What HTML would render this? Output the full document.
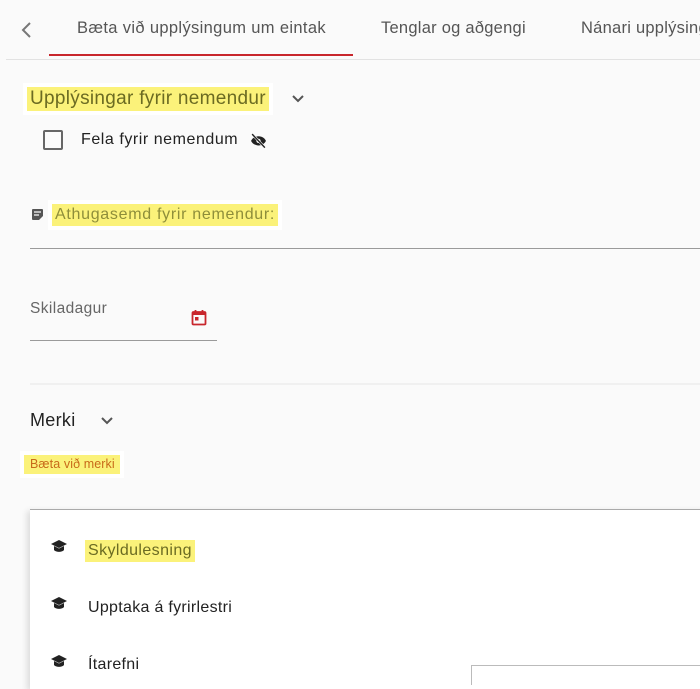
<!DOCTYPE html>
<html><head><meta charset="utf-8"><style>
*{margin:0;padding:0;box-sizing:border-box}
body{width:700px;height:675px;overflow:hidden;background:#fafafa;font-family:"Liberation Sans",sans-serif;position:relative;color:#222}
.a{position:absolute;white-space:nowrap}
.hl{background:#fbf27a;box-shadow:0 0 0 4px #fff}
</style></head><body>
<svg class="a" style="left:18px;top:20px" width="16" height="20" viewBox="0 0 16 20"><path d="M12 3 L5 10 L12 17" stroke="#777" stroke-width="2" fill="none"/></svg>
<div class="a" style="left:77px;top:19px;font-size:16.5px;letter-spacing:0.35px;color:#555">Bæta við upplýsingum um eintak</div>
<div class="a" style="left:381px;top:19px;font-size:16.5px;letter-spacing:0.25px;color:#555">Tenglar og aðgengi</div>
<div class="a" style="left:581px;top:19px;font-size:16.5px;letter-spacing:0.25px;color:#555">Nánari upplýsingar</div>
<div class="a" style="left:49px;top:54px;width:304px;height:2px;background:#c8262c"></div>
<div class="a" style="left:6px;top:59px;width:694px;height:1px;background:#e2e2e2"></div>
<div class="a hl" style="left:27px;top:87px;height:24px;padding:0 3px;font-size:19px;letter-spacing:0.3px;line-height:24px;color:#6b6b22">Upplýsingar fyrir nemendur</div>
<svg class="a" style="left:290px;top:92px" width="16" height="14" viewBox="0 0 16 14"><path d="M3 4 L8 9 L13 4" stroke="#555" stroke-width="2" fill="none"/></svg>
<div class="a" style="left:43px;top:130px;width:20px;height:20px;border:2px solid #666;border-radius:2px"></div>
<div class="a" style="left:81px;top:131px;font-size:16px;letter-spacing:0.55px;color:#222">Fela fyrir nemendum</div>
<svg class="a" style="left:249px;top:132px" width="19" height="17" viewBox="0 0 24 24"><path d="M12 6c-5 0-9 3-10.5 6.5C3 16 7 19 12 19s9-3 10.5-6.5C21 9 17 6 12 6z" fill="#222"/><circle cx="12" cy="12.5" r="3" fill="#fafafa"/><path d="M3 3L21 22" stroke="#fafafa" stroke-width="3.5"/><path d="M3 3L21 22" stroke="#222" stroke-width="2"/></svg>
<svg class="a" style="left:31px;top:208px" width="13" height="13" viewBox="0 0 13 13"><path d="M1 2a1 1 0 0 1 1-1h9a1 1 0 0 1 1 1v6l-4 4H2a1 1 0 0 1-1-1z" fill="#555"/><path d="M3 4h7M3 7h5" stroke="#fafafa" stroke-width="1.2"/></svg>
<div class="a hl" style="left:52px;top:204px;height:22px;padding:0 3px;font-size:16px;letter-spacing:0.7px;line-height:22px;color:#8e8e3a">Athugasemd fyrir nemendur:</div>
<div class="a" style="left:30px;top:248px;width:670px;height:1px;background:#9a9a9a"></div>
<div class="a" style="left:30px;top:300px;font-size:15.5px;letter-spacing:0.4px;color:#666">Skiladagur</div>
<svg class="a" style="left:191px;top:309px" width="16" height="17" viewBox="0 0 16 17"><rect x="1.5" y="3" width="13" height="12.5" rx="1" fill="none" stroke="#c8262c" stroke-width="1.8"/><rect x="1.5" y="3" width="13" height="3" fill="#c8262c"/><path d="M4.5 1v3M11.5 1v3" stroke="#c8262c" stroke-width="1.8"/><rect x="4" y="8" width="3.5" height="3.5" fill="#c8262c"/></svg>
<div class="a" style="left:30px;top:340px;width:187px;height:1px;background:#9a9a9a"></div>
<div class="a" style="left:30px;top:383px;width:670px;height:2px;background:#f0f0f0"></div>
<div class="a" style="left:30px;top:410px;font-size:18px;letter-spacing:0.3px;color:#222">Merki</div>
<svg class="a" style="left:99px;top:414px" width="16" height="14" viewBox="0 0 16 14"><path d="M3 4 L8 9 L13 4" stroke="#555" stroke-width="2" fill="none"/></svg>
<div class="a hl" style="left:24px;top:455px;height:19px;padding:0 5px 0 6px;font-size:12.5px;letter-spacing:0.1px;line-height:19px;color:#c86a1a">Bæta við merki</div>
<div class="a" style="left:30px;top:509px;width:680px;height:180px;background:#fff;border-top:1px solid #aaa;box-shadow:-3px 2px 6px rgba(0,0,0,.12)"></div>
<svg class="a" style="left:50px;top:539px" width="18" height="15" viewBox="0 0 18 15"><path d="M9 1L1 5l8 4 8-4z" fill="#222"/><path d="M4 7v4c2 2.5 8 2.5 10 0V7l-5 2.5z" fill="#222"/></svg>
<div class="a hl" style="left:85px;top:540px;height:22px;padding:0 3px;font-size:16px;letter-spacing:0.4px;line-height:22px;color:#6b6b22;box-shadow:none">Skyldulesning</div>
<svg class="a" style="left:50px;top:596px" width="18" height="15" viewBox="0 0 18 15"><path d="M9 1L1 5l8 4 8-4z" fill="#222"/><path d="M4 7v4c2 2.5 8 2.5 10 0V7l-5 2.5z" fill="#222"/></svg>
<div class="a" style="left:88px;top:599px;font-size:16px;letter-spacing:0.3px;color:#222">Upptaka á fyrirlestri</div>
<svg class="a" style="left:50px;top:654px" width="18" height="15" viewBox="0 0 18 15"><path d="M9 1L1 5l8 4 8-4z" fill="#222"/><path d="M4 7v4c2 2.5 8 2.5 10 0V7l-5 2.5z" fill="#222"/></svg>
<div class="a" style="left:88px;top:656px;font-size:16px;letter-spacing:0.3px;color:#222">Ítarefni</div>
<div class="a" style="left:471px;top:665px;width:240px;height:20px;border-top:1px solid #bbb;border-left:1px solid #bbb"></div>
</body></html>
